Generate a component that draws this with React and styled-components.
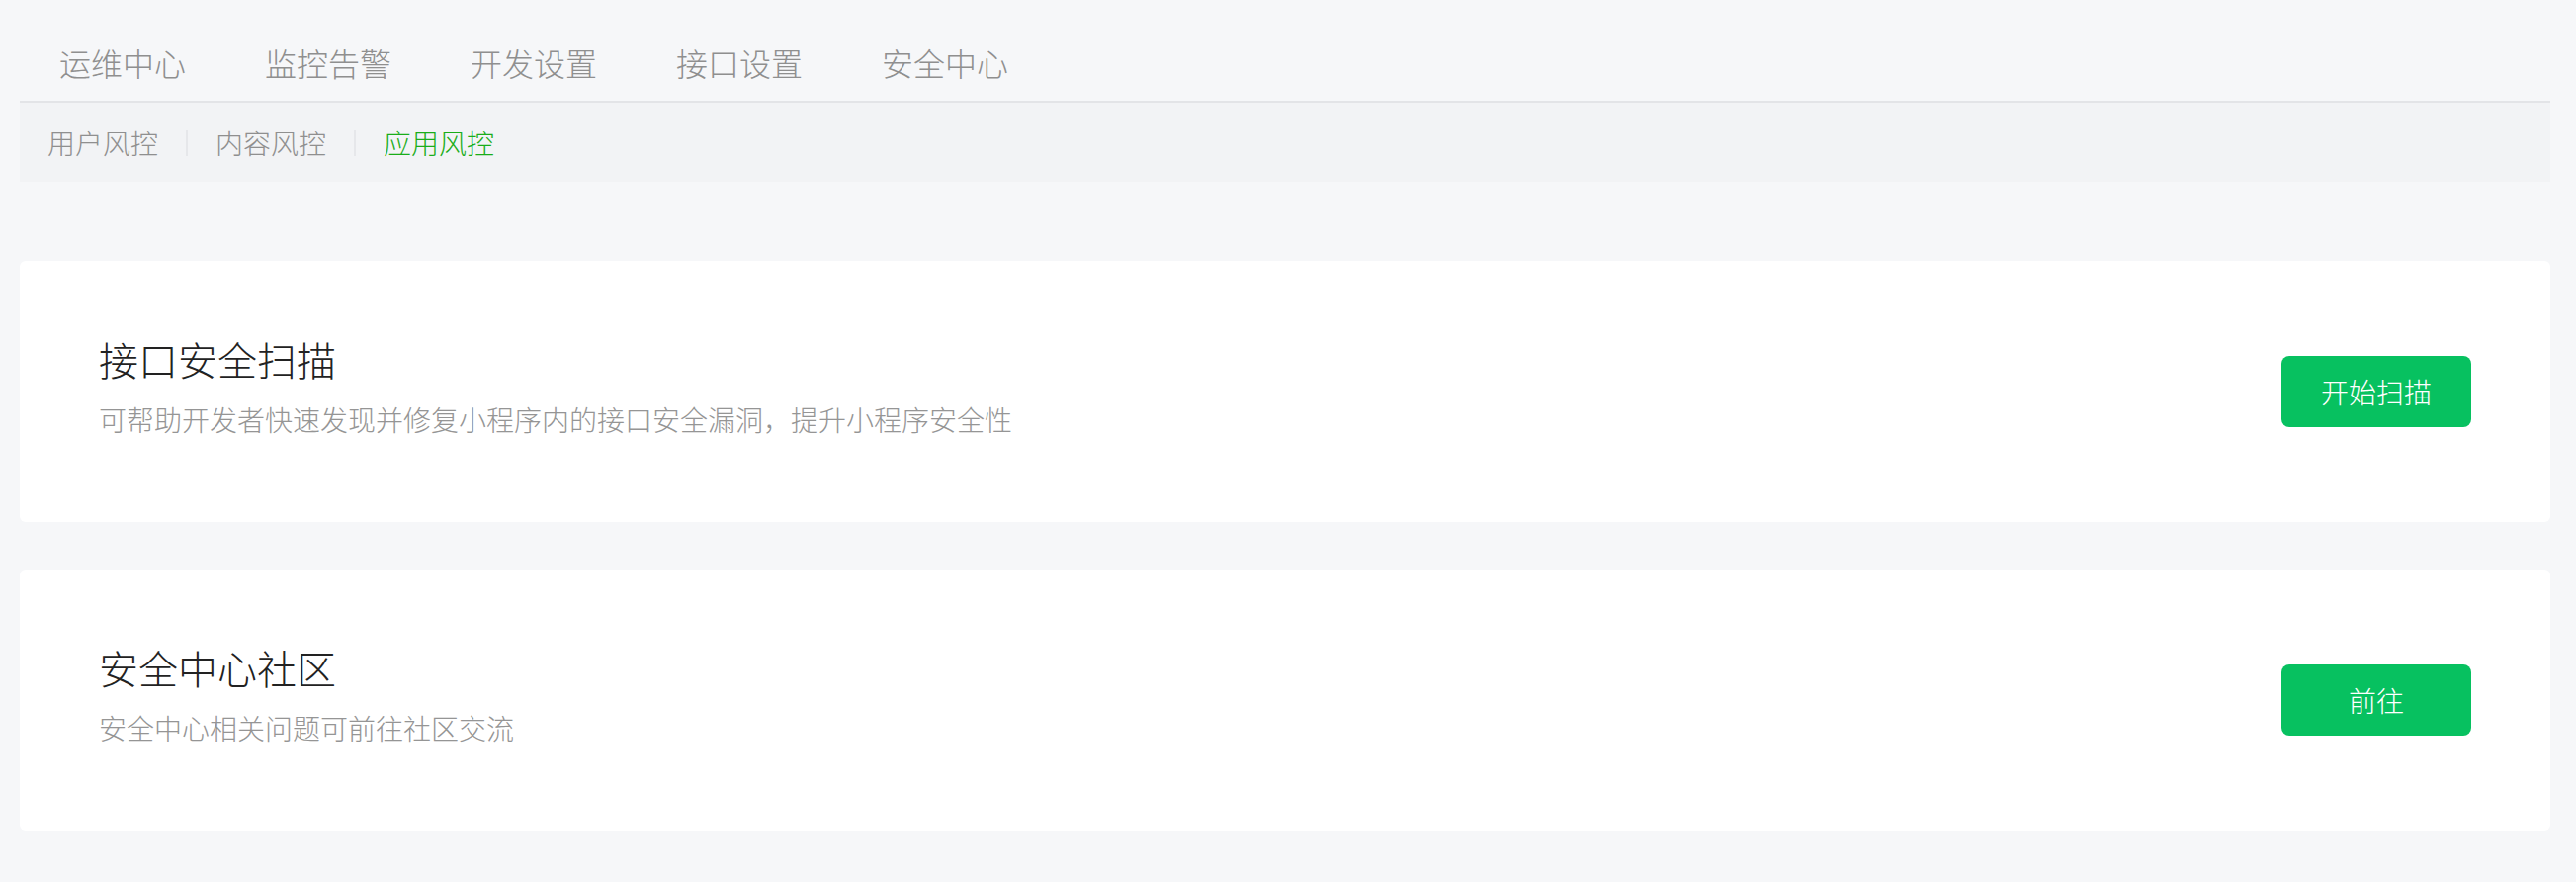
import React, { useState } from 'react';
import styled, { createGlobalStyle } from 'styled-components';

const GlobalStyle = createGlobalStyle`
  html, body {
    margin: 0;
    padding: 0;
    background: #f6f7f9;
  }
  body {
    font-family: "Noto Sans CJK SC", "Noto Sans", sans-serif;
    font-weight: 300;
  }
`;

const Page = styled.div`
  width: 2560px;
  padding: 24px 0 0 20px;
`;

const Tabs = styled.div`
  display: flex;
  border-bottom: 2px solid #e3e4e7;
`;

const Tab = styled.div`
  padding: 0 40px;
  font-size: 32px;
  line-height: 78px;
  color: #8f8f8f;
  white-space: nowrap;
`;

const SubNav = styled.div`
  display: flex;
  align-items: center;
  height: 80px;
  background: #f2f3f5;
`;

const SubItem = styled.div`
  padding: 0 28px;
  font-size: 28px;
  line-height: 40px;
  white-space: nowrap;
  color: ${(p) => (p.$active ? '#1aad19' : '#8f8f8f')};
`;

const Divider = styled.span`
  width: 2px;
  height: 27px;
  background: #e6e7ea;
`;

const Cards = styled.div`
  display: flex;
  flex-direction: column;
  gap: 48px;
  margin-top: 80px;
`;

const Card = styled.div`
  display: flex;
  align-items: center;
  justify-content: space-between;
  height: 264px;
  padding: 0 80px;
  box-sizing: border-box;
  background: #fff;
  border-radius: 6px;
`;

const Info = styled.div`
  margin-bottom: 10px;
`;

const Title = styled.div`
  font-size: 40px;
  line-height: 48px;
  color: #222;
`;

const Desc = styled.div`
  margin-top: 17px;
  font-size: 28px;
  line-height: 40px;
  color: #959595;
`;

const Button = styled.button`
  width: 192px;
  height: 72px;
  border: none;
  border-radius: 8px;
  background: #07c160;
  color: #fff;
  font-family: inherit;
  font-weight: 300;
  font-size: 28px;
  cursor: pointer;
`;

const tabs = ['运维中心', '监控告警', '开发设置', '接口设置', '安全中心'];
const subs = ['用户风控', '内容风控', '应用风控'];

const cards = [
  {
    title: '接口安全扫描',
    desc: '可帮助开发者快速发现并修复小程序内的接口安全漏洞，提升小程序安全性',
    action: '开始扫描',
  },
  {
    title: '安全中心社区',
    desc: '安全中心相关问题可前往社区交流',
    action: '前往',
  },
];

export default function App() {
  const [active, setActive] = useState(2);

  return (
    <Page>
      <GlobalStyle />
      <Tabs>
        {tabs.map((t) => (
          <Tab key={t}>{t}</Tab>
        ))}
      </Tabs>
      <SubNav>
        {subs.map((s, i) => (
          <React.Fragment key={s}>
            {i > 0 && <Divider />}
            <SubItem $active={i === active} onClick={() => setActive(i)}>
              {s}
            </SubItem>
          </React.Fragment>
        ))}
      </SubNav>
      <Cards>
        {cards.map((c) => (
          <Card key={c.title}>
            <Info>
              <Title>{c.title}</Title>
              <Desc>{c.desc}</Desc>
            </Info>
            <Button>{c.action}</Button>
          </Card>
        ))}
      </Cards>
    </Page>
  );
}
